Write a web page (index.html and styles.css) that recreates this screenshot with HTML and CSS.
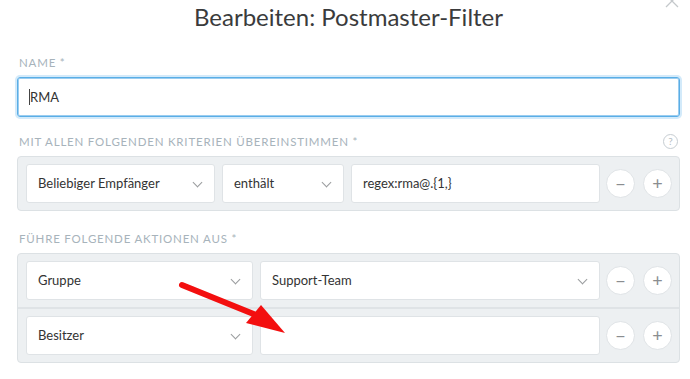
FILE: index.html
```html
<!DOCTYPE html>
<html lang="de">
<head>
    <meta charset="UTF-8">
    <title>Bearbeiten: Postmaster-Filter</title>
    <link rel="stylesheet" href="styles.css">
</head>
<body>
    <div class="modal">
        <svg class="close" width="16" height="16" viewBox="0 0 16 16">
            <path d="M2 2 L14 14 M14 2 L2 14" stroke="#c4c8cb" stroke-width="1.3" fill="none"/>
        </svg>
        <h1 class="modal-title">Bearbeiten: Postmaster-Filter</h1>

        <div class="field">
            <div class="label-row"><label>Name *</label></div>
            <div class="name-input"><span class="caret"></span>RMA</div>
        </div>

        <div class="field">
            <div class="label-row">
                <label>Mit allen folgenden Kriterien übereinstimmen *</label>
                <span class="help">?</span>
            </div>
            <div class="box">
                <div class="row row-match">
                    <div class="control select">Beliebiger Empfänger<span class="chev"></span></div>
                    <div class="control select">enthält<span class="chev"></span></div>
                    <div class="control">regex:rma@.{1,}</div>
                    <div class="btns">
                        <span class="circle">&minus;</span>
                        <span class="circle">+</span>
                    </div>
                </div>
            </div>
        </div>

        <div class="field">
            <div class="label-row"><label>Führe folgende Aktionen aus *</label></div>
            <div class="box">
                <div class="row row-action">
                    <div class="control select">Gruppe<span class="chev"></span></div>
                    <div class="control select">Support-Team<span class="chev"></span></div>
                    <div class="btns">
                        <span class="circle">&minus;</span>
                        <span class="circle">+</span>
                    </div>
                </div>
                <div class="row row-action">
                    <div class="control select">Besitzer<span class="chev"></span></div>
                    <div class="control"></div>
                    <div class="btns">
                        <span class="circle">&minus;</span>
                        <span class="circle">+</span>
                    </div>
                </div>
            </div>
        </div>

        <!-- Markierungspfeil -->
        <svg class="arrow" width="690" height="379" viewBox="0 0 690 379">
            <line x1="182" y1="285" x2="256" y2="315" stroke="#f30f0f" stroke-width="6" stroke-linecap="round"/>
            <polygon points="285,333 246,323 261,305" fill="#f30f0f"/>
        </svg>
    </div>
</body>
</html>
```

FILE: styles.css
```css
body {
    margin: 0;
    font-family: 'Lato', 'Open Sans', sans-serif;
    background-color: #fff;
    color: #333;
}
.modal {
    position: relative;
    width: 690px;
    height: 379px;
    padding: 0 10px 0 17px;
    box-sizing: border-box;
    overflow: hidden;
}
.close {
    position: absolute;
    top: -7px;
    right: 10px;
}
.modal-title {
    margin: 0;
    font-size: 24px;
    font-weight: normal;
    line-height: 34px;
    text-align: center;
    color: #3a3b3c;
}
.field {
    margin-top: 20px;
}
.label-row {
    display: flex;
    justify-content: space-between;
    align-items: center;
    height: 16px;
    margin-bottom: 7px;
    padding: 0 2px;
}
label {
    font-size: 11.5px;
    text-transform: uppercase;
    letter-spacing: 0.8px;
    color: #a7b3bb;
}
.help {
    width: 13px;
    height: 13px;
    border: 1px solid #c6cdd2;
    border-radius: 50%;
    font-size: 10px;
    line-height: 13px;
    text-align: center;
    color: #b5bec4;
}
.name-input {
    height: 38px;
    border: 1px solid #5aaee6;
    border-radius: 3px;
    box-shadow: 0 0 0 2px #d3eafa, inset 0 0 0 1px #9bcdf0;
    padding-left: 11px;
    font-size: 13px;
    line-height: 38px;
    display: flex;
    align-items: center;
}
.caret {
    width: 1px;
    height: 16px;
    background-color: #444;
}
.field + .field {
    margin-top: 16px;
}
.field:last-of-type {
    margin-top: 19px;
}
.box {
    background-color: #edf0f2;
    border: 1px solid #dce1e4;
    border-radius: 4px;
}
.row {
    display: grid;
    column-gap: 7px;
    align-items: center;
    padding: 7px 7px 7px 8px;
}
.row + .row {
    border-top: 2px solid #dfe3e6;
}
.row-match {
    grid-template-columns: 189px 122px 1fr auto;
}
.row-action {
    grid-template-columns: 227px 1fr auto;
}
.control {
    position: relative;
    height: 37px;
    background-color: #fff;
    border: 1px solid #dfe3e6;
    border-radius: 3px;
    padding-left: 11px;
    font-size: 13px;
    line-height: 37px;
    white-space: nowrap;
}
.chev {
    position: absolute;
    right: 13px;
    top: 14px;
    width: 6px;
    height: 6px;
    border-right: 1.5px solid #9a9c9e;
    border-bottom: 1.5px solid #9a9c9e;
    transform: rotate(45deg);
}
.btns {
    display: flex;
    gap: 8px;
    margin-left: -1px;
}
.circle {
    width: 27px;
    height: 27px;
    border: 1px solid #dfe3e6;
    border-radius: 50%;
    background-color: #fff;
    color: #8a8d90;
    font-size: 18px;
    line-height: 26px;
    text-align: center;
}
.arrow {
    position: absolute;
    left: 0;
    top: 0;
    pointer-events: none;
}
```
